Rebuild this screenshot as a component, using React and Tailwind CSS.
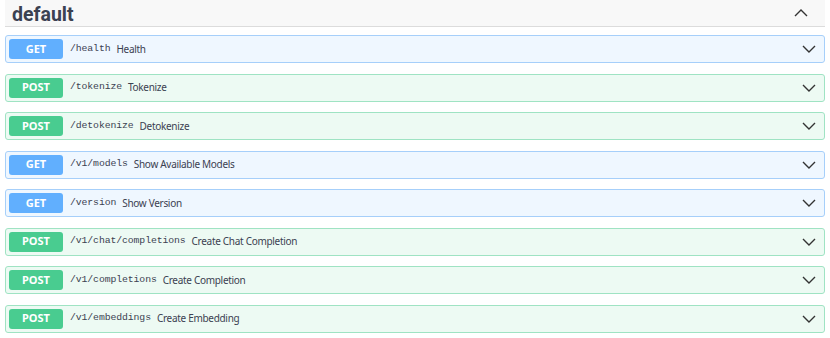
import React from "react";

const ops = [
  { method: "GET", path: "/health", summary: "Health" },
  { method: "POST", path: "/tokenize", summary: "Tokenize" },
  { method: "POST", path: "/detokenize", summary: "Detokenize" },
  { method: "GET", path: "/v1/models", summary: "Show Available Models" },
  { method: "GET", path: "/version", summary: "Show Version" },
  { method: "POST", path: "/v1/chat/completions", summary: "Create Chat Completion" },
  { method: "POST", path: "/v1/completions", summary: "Create Completion" },
  { method: "POST", path: "/v1/embeddings", summary: "Create Embedding" },
];

const Chevron = ({ up }) => (
  <svg width="14" height="8" viewBox="0 0 14 8" fill="none">
    <path
      d={up ? "M1 7L7 1L13 7" : "M1 1L7 7L13 1"}
      stroke="#333"
      strokeWidth="1.4"
    />
  </svg>
);

const OpRow = ({ op }) => {
  const isGet = op.method === "GET";
  return (
    <div
      className={`flex items-center h-[28px] rounded-[3px] border pl-[3px] pr-[8px] ${
        isGet ? "bg-[#eff7ff] border-[#a6cffa]" : "bg-[#edfaf3] border-[#9fe3c3]"
      }`}
    >
      <div
        className={`w-[54px] h-[20px] rounded-[3px] flex items-center justify-center text-white font-bold text-[11px] ${
          isGet ? "bg-[#61affe]" : "bg-[#49cc90]"
        }`}
      >
        {op.method}
      </div>
      <span className="ml-[7px] font-['Liberation_Mono',monospace] text-[9.8px] tracking-[-0.1px] text-[#3b4151]">
        {op.path}
      </span>
      <span className="ml-[6px] text-[10px] tracking-[-0.3px] text-[#3b4151]">{op.summary}</span>
      <div className="ml-auto flex items-center">
        <Chevron />
      </div>
    </div>
  );
};

export default function App() {
  return (
    <div className="w-[830px] h-[338px] bg-white font-['Noto_Sans',sans-serif] px-[5px] overflow-hidden">
      <div className="flex items-center h-[27px] bg-[#f8f8f8] border-b border-[#dcdcdc] pl-[7px] pr-[17px]">
        <span className="pt-[3px] text-[19.5px] font-bold font-['Roboto',sans-serif] text-[#3b4151] leading-none">default</span>
        <div className="ml-auto flex items-center">
          <Chevron up />
        </div>
      </div>
      <div className="flex flex-col gap-[10.5px] mt-[8px]">
        {ops.map((op) => (
          <OpRow key={op.path} op={op} />
        ))}
      </div>
    </div>
  );
}
